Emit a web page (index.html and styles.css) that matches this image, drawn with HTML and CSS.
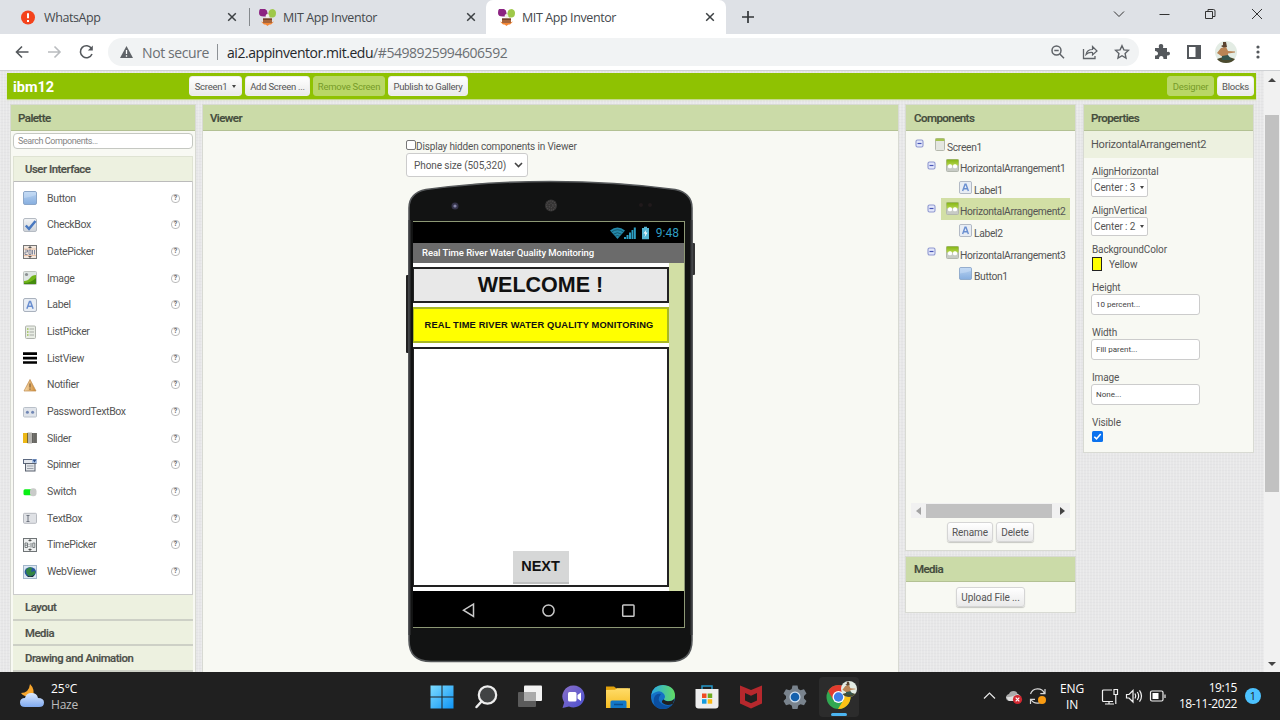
FILE: index.html
```html
<!DOCTYPE html>
<html lang="en">
<head>
<meta charset="utf-8">
<title>MIT App Inventor</title>
<link rel="stylesheet" href="styles.css">
</head>
<body>
<svg class="defs" width="0" height="0">
<defs>
<linearGradient id="gBlue" x1="0" y1="0" x2="0" y2="1"><stop offset="0" stop-color="#b9d3f1"/><stop offset="1" stop-color="#86aedf"/></linearGradient>
<linearGradient id="gGrey" x1="0" y1="0" x2="0" y2="1"><stop offset="0" stop-color="#f2f4f6"/><stop offset="1" stop-color="#cdd2d8"/></linearGradient>
<linearGradient id="gGreen" x1="0" y1="0" x2="0" y2="1"><stop offset="0" stop-color="#84b414"/><stop offset="1" stop-color="#b4d64c"/></linearGradient>
<linearGradient id="gOrange" x1="0" y1="0" x2="1" y2="0"><stop offset="0" stop-color="#f8ddb0"/><stop offset="1" stop-color="#cf8a34"/></linearGradient>
<linearGradient id="gWin" x1="0" y1="0" x2="1" y2="1"><stop offset="0" stop-color="#7ddcff"/><stop offset="1" stop-color="#0f94f5"/></linearGradient>
<linearGradient id="gChat" x1="0" y1="0" x2="1" y2="1"><stop offset="0" stop-color="#8a6fc8"/><stop offset="1" stop-color="#4a50cf"/></linearGradient>
<linearGradient id="gEdge" x1="0" y1="0" x2="1" y2="0"><stop offset="0" stop-color="#2aa8e6"/><stop offset="1" stop-color="#62dc62"/></linearGradient>
<linearGradient id="gFold" x1="0" y1="0" x2="0" y2="1"><stop offset="0" stop-color="#ffdc6a"/><stop offset="1" stop-color="#f6bd22"/></linearGradient>
<linearGradient id="gCloud" x1="0" y1="0" x2="0" y2="1"><stop offset="0" stop-color="#dbe9fd"/><stop offset="1" stop-color="#7fa9ef"/></linearGradient>
<symbol id="fav" viewBox="0 0 17 17"><path d="M1 0h5q2.500 1 2.500 4v3.500H6Q0 8 0 4 0 1 1 0z" fill="#8c2482"/><path d="M10 2q1-2 4-2 3 1 3 4 0 4-3 4.500h-3L9 6z" fill="#9fc849"/><circle cx="8.500" cy="7" r="1.900" fill="#f2efe8"/><path d="M2 12.500l3 1h7l3-1-3 3H5z" fill="#f58634"/><path d="M4 9.500h9v4.500H4z" fill="#a8653a"/><path d="M4 9.500h9v1.300H4z" fill="#6b3a26"/><path d="M5 14h7l-3.500 3z" fill="#f58634"/></symbol>
<symbol id="x" viewBox="0 0 10 10"><path d="M1.200 1.200l7.600 7.600M8.800 1.200L1.200 8.800" stroke="#3c4043" stroke-width="1.500"/></symbol>
<symbol id="avatar" viewBox="0 0 22 22"><circle cx="11" cy="11" r="11" fill="#e3ece4"/><path d="M2 18q9-4 18 0-3 4-9 4t-9-4z" fill="#4b4a2e"/><path d="M8 1l3 0 1 5-3 1-3-2 2-1z" fill="#5b4430"/><path d="M6 7l5-1 2 4 7 .500v1l-7 1v3H7L2 12z" fill="#b98455"/><path d="M7 15l6-1 4 5H7z" fill="#35564f"/></symbol>
<symbol id="button" viewBox="0 0 14 14"><rect x=".5" y=".5" width="13" height="13" rx="1.500" fill="url(#gBlue)" stroke="#8ba6c8"/><path d="M1 7q7-1 12-3V1H1z" fill="#d4e5f9" opacity=".4"/></symbol>
<symbol id="checkbox" viewBox="0 0 14 14"><rect x=".5" y=".5" width="13" height="13" rx="1.500" fill="url(#gGrey)" stroke="#b5bbc3"/><path d="M2.800 7.500l3.200 3.300L12.500 3" fill="none" stroke="#4878c0" stroke-width="2.500"/></symbol>
<symbol id="date" viewBox="0 0 14 14"><rect x=".5" y=".5" width="13" height="13" fill="#f3e8df" stroke="#777"/><path d="M7 1v2.500M7 11v2.500M5.500 2.500h3M5.500 11.500h3" stroke="#555"/><path d="M2 5h2.500v2H2v2.500h2.500M6 5h2v4.500H6zM9.500 5v4.500M11.500 5v4.500" fill="none" stroke="#777f96" stroke-width=".9"/><path d="M1 4h12M1 10.500h12" stroke="#e6a47c" stroke-width=".6"/></symbol>
<symbol id="image" viewBox="0 0 14 14"><rect x=".5" y=".5" width="13" height="13" rx="1" fill="#dfe6e3" stroke="#c0c5c0"/><circle cx="3.500" cy="3.500" r="1.600" fill="#8b9091"/><path d="M1 10q4 0 6-3t6-3v9H1z" fill="#72b51a"/><path d="M1 12q7 0 12-5v6H1z" fill="#448c0e"/></symbol>
<symbol id="label" viewBox="0 0 14 14"><rect x=".5" y=".5" width="13" height="13" rx="1.500" fill="#e8edf4" stroke="#aab2be"/><path d="M3.900 10.800L6.500 3.500h1L10.100 10.800M4.800 8.300h4.400" fill="none" stroke="#6a8fd0" stroke-width="1.500"/></symbol>
<symbol id="listpicker" viewBox="0 0 14 14"><rect x="2.500" y="1" width="10" height="12.500" rx="1" fill="#e9ede5" stroke="#b0b4ad"/><path d="M4 4h1.500M4 7h1.500M4 10h1.500" stroke="#9bbf54" stroke-width="1.400"/><path d="M6.500 4h4.500M6.500 7h4.500M6.500 10h4.500" stroke="#a7aba5"/></symbol>
<symbol id="listview" viewBox="0 0 14 14"><path d="M0 2.700h14M0 7.100h14M0 11.500h14" stroke="#000" stroke-width="2.700"/></symbol>
<symbol id="notifier" viewBox="0 0 14 14"><path d="M7 1.500L13 13H1z" fill="url(#gOrange)" stroke="#bf8a4c" stroke-width=".7"/><path d="M7 5.500v4M7 10.500v1.300" stroke="#7d603c" stroke-width="1.200"/></symbol>
<symbol id="password" viewBox="0 0 14 14"><rect x=".5" y="2.500" width="13" height="9.500" rx="1" fill="#e0e4ea" stroke="#b9c0c9"/><circle cx="4.400" cy="7.300" r="1.500" fill="#7187b5"/><circle cx="9.600" cy="7.300" r="1.500" fill="#7187b5"/></symbol>
<symbol id="slider" viewBox="0 0 14 14"><path d="M0 2h5v10H0z" fill="#edb817"/><path d="M9 2h5v10H9z" fill="#73726d"/><rect x="4.500" y="1.500" width="4.500" height="11" fill="#b5b4b0"/><path d="M4.500 2v10" stroke="#7d6a2a"/><path d="M9.500 2v10M12 2v10" stroke="#5d5d5a" stroke-width=".8"/></symbol>
<symbol id="spinner" viewBox="0 0 14 14"><rect x=".5" y="1.500" width="12.500" height="4" fill="#e4e8ee" stroke="#5c6980"/><path d="M9 1h5v4H9z" fill="#a9c0e2"/><path d="M9.500 1.500h4l-2 3z" fill="#2c4d88"/><rect x="2.500" y="5.500" width="9.500" height="7.500" fill="#e3e6ea" stroke="#59616e"/><path d="M4 8h6.500M4 10.500h6.500" stroke="#9ba1aa"/></symbol>
<symbol id="switch" viewBox="0 0 14 14"><rect x="0.500" y="4.200" width="9" height="6" rx="1.500" fill="#09ef14"/><rect x="7" y="3.200" width="6.500" height="8" rx="3" fill="#c9cbc9"/></symbol>
<symbol id="textbox" viewBox="0 0 14 14"><rect x=".5" y="2.300" width="13" height="10" rx="1" fill="#dfe1e5" stroke="#b7bac0"/><path d="M3.500 4.500h3M3.500 10.500h3M5 4.500v6" stroke="#6f7580"/></symbol>
<symbol id="time" viewBox="0 0 14 14"><rect x=".5" y=".5" width="13" height="13" fill="#eef0f0" stroke="#6f7476"/><path d="M7 1v2.500M7 10.500V13M5.500 2.500h3M5.500 11.500h3" stroke="#555"/><path d="M2 5h2.500v4.500H2zM2 7.200h2.500M6 5.800v1M6 8v1M8 5v4.500M9.800 5h2v4.500h-2z" fill="none" stroke="#5e6568" stroke-width=".8"/></symbol>
<symbol id="web" viewBox="0 0 14 14"><rect x=".5" y=".5" width="13" height="13" fill="#dce7f2" stroke="#a2b6cb"/><ellipse cx="7.300" cy="7" rx="5.700" ry="4.800" fill="#24549c"/><path d="M3 5q3-4 6-2l-1 4 4-1q1 4-4 5-5 0-5-6z" fill="#328544"/><path d="M3 10q5 3 9-1l-2 3H5z" fill="#1a3238"/></symbol>
<symbol id="screen" viewBox="0 0 10 13"><rect x=".5" y=".5" width="9" height="12" rx="1" fill="#e4e6e0" stroke="#b4b8ad"/><path d="M.5 .5h9v2.500h-9z" fill="#a4c250"/></symbol>
<symbol id="harr" viewBox="0 0 13 13"><rect x=".5" y=".5" width="12" height="12" rx="1" fill="#c7cbc5" stroke="#b2b7ae"/><path d="M.5 .5h12v6H.500z" fill="url(#gGreen)"/><rect x="2" y="5.300" width="4" height="4" rx="1.500" fill="#fff"/><rect x="7" y="5.300" width="4" height="4" rx="1.500" fill="#fff"/></symbol>
<symbol id="minus" viewBox="0 0 9 9"><rect x="1" y="1" width="7" height="7" rx="1.500" fill="#e4e8fb" stroke="#8f98cf" stroke-width="1.100"/><path d="M2.500 4.500h4" stroke="#4755b5" stroke-width="1.200"/></symbol>
</defs>
</svg>

<div class="tabs">
  <div class="tab tab-a">
    <svg class="t-ico" viewBox="0 0 17 17"><circle cx="9" cy="8.500" r="7" fill="#f4431c"/><path d="M9 4.300v5M9 11v2" stroke="#fff" stroke-width="2"/></svg>
    <span class="t-name">WhatsApp</span><svg class="t-x"><use href="#x"/></svg>
  </div>
  <div class="tab tab-b"><svg class="t-ico"><use href="#fav"/></svg><span class="t-name">MIT App Inventor</span><svg class="t-x"><use href="#x"/></svg></div>
  <div class="tab tab-c"><svg class="t-ico"><use href="#fav"/></svg><span class="t-name">MIT App Inventor</span><svg class="t-x"><use href="#x"/></svg></div>
  <svg class="plus" viewBox="0 0 12 12"><path d="M6 0v12M0 6h12" stroke="#333639" stroke-width="1.700"/></svg>
  <svg class="win" viewBox="0 0 160 20"><g fill="none" stroke="#333" stroke-width="1"><path d="M10 7.500l5 5 5-5M55.500 10.500h10M101.500 7.500h7v7h-7zM104 7.500v-2h5.500q1.500 0 1.500 1.500v5.500h-2M148 5l10 10M158 5l-10 10"/></g></svg>
</div>

<div class="toolbar">
  <svg class="nav" viewBox="0 0 94 36"><g fill="none" stroke="#54585c" stroke-width="1.600"><path d="M28.500 18H17M22 12.500L16.500 18l5.500 5.500"/><path d="M48 18h11.500M54.500 12.500L60 18l-5.500 5.500" stroke="#b9bcbf"/><path d="M91.500 14.500A6 6 0 1 0 92 20"/></g><path d="M92.800 11.500v5h-5z" fill="#54585c"/></svg>
  <div class="omni">
    <svg class="warn" viewBox="0 0 13 12"><path d="M6.500 0L13 12H0z" fill="#5f6368"/><path d="M6.500 4v4M6.500 9.300v1.400" stroke="#fff" stroke-width="1.300"/></svg>
    <span class="notsec">Not secure</span><i class="sep"></i><span class="url"><b>ai2.appinventor.mit.edu</b>/#5498925994606592</span>
    <svg class="omni-ico" viewBox="0 0 80 18"><g fill="none" stroke="#5f6368" stroke-width="1.500"><circle cx="6.500" cy="7.500" r="4.500"/><path d="M9.800 11l4.200 4.200M4.300 7.500h4.400"/><path d="M33.500 6v9.500H45V13" stroke-width="1.300"/><path d="M36 11.500q1-5 6.500-5V3.500L47 8l-4.500 4V9.500q-4-.5-6.500 2z" stroke-width="1.200"/><path d="M72 2.700l1.900 4.200 4.500.5-3.300 3.100.9 4.500-4-2.300-4 2.300.9-4.500-3.300-3.100 4.500-.5z" stroke-width="1.400"/></g></svg>
  </div>
  <svg class="ext" viewBox="0 0 44 18"><path d="M1 5h4q-1-4 2-4t2 4h4v4q3-1 3 1.500T13 12.500V16H9.500q0-3-2.300-3T5 16H1v-3.500q3 0 3-2T1 8z" fill="#54585c"/><path d="M34 3h12v12H34z" fill="none" stroke="#54585c" stroke-width="2"/><path d="M41.500 3h5v12h-5z" fill="#54585c"/></svg>
  <svg class="ava"><use href="#avatar"/></svg>
  <svg class="dots" viewBox="0 0 4 14"><g fill="#54585c"><circle cx="2" cy="2" r="1.600"/><circle cx="2" cy="7" r="1.600"/><circle cx="2" cy="12" r="1.600"/></g></svg>
</div>

<div class="page">
  <div class="main">
    <div class="greenbar">
      <span class="proj">ibm12</span>
      <span class="btn b1">Screen1 <i class="tri"></i></span><span class="btn b2">Add Screen ...</span><span class="btn b3 off">Remove Screen</span><span class="btn b4">Publish to Gallery</span>
      <span class="btn b5 off">Designer</span><span class="btn b6">Blocks</span>
    </div>
    <div class="cols">
      <section class="panel palette">
        <h2>Palette</h2>
        <div class="search">Search Components...</div>
        <h3 class="first">User Interface</h3>
        <ul class="list">
          <li><svg><use href="#button"/></svg><span>Button</span><em>?</em></li>
          <li><svg><use href="#checkbox"/></svg><span>CheckBox</span><em>?</em></li>
          <li><svg><use href="#date"/></svg><span>DatePicker</span><em>?</em></li>
          <li><svg><use href="#image"/></svg><span>Image</span><em>?</em></li>
          <li><svg><use href="#label"/></svg><span>Label</span><em>?</em></li>
          <li><svg><use href="#listpicker"/></svg><span>ListPicker</span><em>?</em></li>
          <li><svg><use href="#listview"/></svg><span>ListView</span><em>?</em></li>
          <li><svg><use href="#notifier"/></svg><span>Notifier</span><em>?</em></li>
          <li><svg><use href="#password"/></svg><span>PasswordTextBox</span><em>?</em></li>
          <li><svg><use href="#slider"/></svg><span>Slider</span><em>?</em></li>
          <li><svg><use href="#spinner"/></svg><span>Spinner</span><em>?</em></li>
          <li><svg><use href="#switch"/></svg><span>Switch</span><em>?</em></li>
          <li><svg><use href="#textbox"/></svg><span>TextBox</span><em>?</em></li>
          <li><svg><use href="#time"/></svg><span>TimePicker</span><em>?</em></li>
          <li><svg><use href="#web"/></svg><span>WebViewer</span><em>?</em></li>
        </ul>
        <h3>Layout</h3><h3>Media</h3><h3>Drawing and Animation</h3>
      </section>

      <section class="panel viewer">
        <h2>Viewer</h2>
        <div class="hidden-row"><i class="cb"></i><span>Display hidden components in Viewer</span></div>
        <div class="size"><span>Phone size (505,320)</span><svg viewBox="0 0 9 6"><path d="M1 1l3.500 3.500L8 1" fill="none" stroke="#444" stroke-width="1.600"/></svg></div>
        <div class="phone">
          <svg class="body" viewBox="0 0 290 484">
            <rect x="0" y="95" width="4" height="78" rx="1" fill="#222"/><rect x="285" y="63" width="4" height="32" rx="1" fill="#333"/>
            <path d="M3 28Q3 13 20 9.500Q80 1.500 144.500 1.500T269 9.500Q286 13 286 28V460Q286 481.500 264 481.500H25Q3 481.500 3 460z" fill="#121313" stroke="#55585a" stroke-width="1.600"/>
            <path d="M3.500 40V455M285.500 40V455" stroke="#3b3d3f" stroke-width="2"/>
            <circle cx="49" cy="26" r="3.500" fill="#343349"/><circle cx="49" cy="26" r="1.600" fill="#8585a8"/>
            <circle cx="145" cy="25.500" r="6" fill="#343333"/><circle cx="145" cy="25.500" r="4.500" fill="none" stroke="#4d4b4b" stroke-width="1.500" stroke-dasharray="1 1"/><circle cx="145" cy="25.500" r="2" fill="none" stroke="#4d4b4b" stroke-width="1.500" stroke-dasharray="1 1"/>
            <circle cx="235" cy="25" r="2" fill="#201a1c"/><circle cx="244" cy="25" r="2" fill="#201a1c"/>
          </svg>
          <div class="screen">
            <div class="status">
              <svg viewBox="0 0 42 14"><g fill="#2d9fc4"><path d="M0 4.500Q7.500-1.500 15 4.500L7.500 13z" fill="#2489aa"/><path d="M1.500 6Q7.500 1.500 13.500 6M3.300 8.200q4-3 8.400 0M5.200 10.300q2.400-1.600 4.600 0" fill="none" stroke="#0b4253" stroke-width=".7"/><path d="M14 13v-2h2v2zM16.500 13V9h2v4zM19 13V6.500h2V13zM21.500 13V4h1.800v9zM23.800 13V1.500h2V13z"/><path d="M32 2h2V.8h3V2h2v11.200h-7z" fill="#55b5d4"/><path d="M36.500 3.500l-3 4h2l-1 4 3-5h-2z" fill="#fff"/></g></svg>
              <span>9:48</span>
            </div>
            <div class="title">Real Time River Water Quality Monitoring</div>
            <div class="content">
              <div class="stack">
                <div class="welcome">WELCOME !</div>
                <div class="yellow">REAL TIME RIVER WATER QUALITY MONITORING</div>
                <div class="big"><span>NEXT</span></div>
              </div>
            </div>
            <svg class="navbar" viewBox="0 0 271 35"><g fill="none" stroke="#c9c9c9" stroke-width="1.500"><path d="M60.500 13v12.500L50.500 19.200z"/><circle cx="135.500" cy="19.500" r="5.600"/><rect x="209.700" y="14" width="11.300" height="11.300" rx=".8"/></g></svg>
          </div>
        </div>
      </section>

      <div class="mid">
        <section class="panel comps">
          <h2>Components</h2>
          <div class="tree">
            <div class="node n0"><svg class="mn"><use href="#minus"/></svg><span class="it"><svg class="scr"><use href="#screen"/></svg>Screen1</span></div>
            <div class="node n1"><svg class="mn"><use href="#minus"/></svg><span class="it"><svg><use href="#harr"/></svg>HorizontalArrangement1</span></div>
            <div class="node n2"><span class="it"><svg><use href="#label"/></svg>Label1</span></div>
            <div class="node n1"><svg class="mn"><use href="#minus"/></svg><span class="it sel"><svg><use href="#harr"/></svg>HorizontalArrangement2</span></div>
            <div class="node n2"><span class="it"><svg><use href="#label"/></svg>Label2</span></div>
            <div class="node n1"><svg class="mn"><use href="#minus"/></svg><span class="it"><svg><use href="#harr"/></svg>HorizontalArrangement3</span></div>
            <div class="node n2"><span class="it"><svg><use href="#button"/></svg>Button1</span></div>
          </div>
          <div class="hscroll"><i class="la"></i><i class="thumb"></i><i class="ra"></i></div>
          <div class="acts"><span class="btn rn">Rename</span><span class="btn dl">Delete</span></div>
        </section>
        <section class="panel media">
          <h2>Media</h2>
          <div class="acts"><span class="btn up">Upload File ...</span></div>
        </section>
      </div>

      <section class="panel props">
        <h2>Properties</h2>
        <div class="sub">HorizontalArrangement2</div>
        <div class="form">
          <label>AlignHorizontal</label><div class="sel2">Center : 3 <i class="tri"></i></div>
          <label>AlignVertical</label><div class="sel2">Center : 2 <i class="tri"></i></div>
          <label>BackgroundColor</label><div class="color"><i></i>Yellow</div>
          <label class="l4">Height</label><div class="box">10 percent...</div>
          <label class="l5">Width</label><div class="box">Fill parent...</div>
          <label class="l5">Image</label><div class="box">None...</div>
          <label class="l5">Visible</label><svg class="chk" viewBox="0 0 11 11"><rect width="11" height="11" rx="1.500" fill="#0b72ee"/><path d="M2.300 5.700l2.200 2.200L8.700 3" fill="none" stroke="#fff" stroke-width="1.600"/></svg>
        </div>
      </section>
    </div>
  </div>
  <div class="vscroll"><i class="ua"></i><i class="vthumb"></i><i class="da"></i></div>
</div>

<div class="taskbar">
  <div class="weather">
    <svg viewBox="0 0 26 26"><path d="M11 1q5 5 3 12H6q-3-1-4-3 8 0 9-9z" fill="#f6a52c"/><path d="M6 24q-5 0-5-4.500T6 15q1-5 6.500-5t6.500 5q6 0 6 4.500T20 24z" fill="url(#gCloud)"/></svg>
    <div><p>25°C</p><p class="haze">Haze</p></div>
  </div>
  <div class="apps">
    <span><svg viewBox="0 0 28 28"><path d="M2.500 2.500h11v11h-11zM14.500 2.500h11v11h-11zM2.500 14.500h11v11h-11zM14.500 14.500h11v11h-11z" fill="url(#gWin)"/></svg></span>
    <span><svg viewBox="0 0 28 28"><circle cx="15.500" cy="12" r="8.700" fill="#414344" stroke="#ededed" stroke-width="2.200"/><path d="M9.500 18.500l-5 5.500" stroke="#ededed" stroke-width="2.500" stroke-linecap="round"/></svg></span>
    <span><svg viewBox="0 0 28 28"><rect x="2" y="9" width="18" height="15" rx="1" fill="#5b5b5b"/><rect x="8" y="2.500" width="18" height="15.500" rx="1" fill="#f2f2f2"/><path d="M8 9h12v9H8z" fill="#aaa"/></svg></span>
    <span><svg viewBox="0 0 28 28"><path d="M14 2.500a11 11 0 1 1-5 21L2.500 25l1.700-5.500A11 11 0 0 1 14 2.500z" fill="url(#gChat)"/><rect x="8" y="9" width="8.500" height="9.500" rx="1.500" fill="#fff"/><path d="M17.500 12l3.500-2.500v8.500L17.500 15.500z" fill="#fff"/></svg></span>
    <span><svg viewBox="0 0 28 28"><path d="M2 3.500h8l2.500 2H24v8H2z" fill="#e2a20b"/><path d="M2 7l9-.2 2-1.500h13V25H2z" fill="url(#gFold)"/><path d="M6.500 25v-6q0-1.500 1.500-1.500h13q1.500 0 1.500 1.500v6z" fill="#1378c8"/><path d="M10 21.500h9" stroke="#0b4f91" stroke-width="1.500"/></svg></span>
    <span><svg viewBox="0 0 28 28"><circle cx="14" cy="14" r="12" fill="#1571c6"/><path d="M2.300 12Q4 2 14 2q12 1 12 11 0 5-6 5-5 0-5-2 2-2 0-5-3-4-8-2-3 1-4.700 3z" fill="url(#gEdge)"/><path d="M12 11q-5 6 1 10 5 3 10 .5-4 5-10 4.500Q3 25 5 15q2-5 7-4z" fill="#0b4fa0"/><path d="M14.500 16.500q2 2 5 1.700 3.500 0 6-2.500l-1.500 5q-6 3-10.500-.7-1.500-2 1-3.500z" fill="#202020"/></svg></span>
    <span><svg viewBox="0 0 28 28"><path d="M9 6.500V3h10v3.500" fill="none" stroke="#2596c8" stroke-width="1.500"/><path d="M2.500 6h23v16.500q0 3-3 3h-17q-3 0-3-3z" fill="#eee"/><path d="M9 10.500h4.500V15H9z" fill="#f04a22"/><path d="M14.700 10.500h4.500V15h-4.500z" fill="#6daa20"/><path d="M9 16.200h4.500v4.500H9z" fill="#139ce0"/><path d="M14.700 16.200h4.500v4.500h-4.500z" fill="#fcb813"/></svg></span>
    <span><svg viewBox="0 0 28 28"><path d="M3 2.500l11 4.500 11-4.500v18L14 25.500 3 20.500zM8 10v7.500l6 2.800 6-2.800V10l-6 2.700z" fill="#b6282d" fill-rule="evenodd"/></svg></span>
    <span><svg viewBox="0 0 28 28"><path d="M11.500 2.500h5l.8 3.500 2.200 1.200 3.500-1 2.500 4.300-2.500 2.500v2.500l2.500 2.500-2.500 4.300-3.500-1-2.200 1.200-.8 3.500h-5l-.8-3.500-2.200-1.200-3.500 1L2.500 18 5 15.500V13l-2.500-2.500L5 6.200l3.500 1L10.700 6z" fill="#79838d"/><circle cx="14" cy="14" r="5.500" fill="#cfe0f1"/><circle cx="14" cy="14" r="4.300" fill="#1561ad"/></svg></span>
    <span class="on"><svg viewBox="0 0 28 28"><circle cx="13.500" cy="14" r="12" fill="#31a852"/><path d="M3.100 8A12 12 0 0 1 24.500 9H13.500L8.300 17z" fill="#e33b2e"/><path d="M24.600 9.200A12 12 0 0 1 13 26l5.500-9-5-8z" fill="#fbc116"/><circle cx="13.500" cy="14" r="6" fill="#fff"/><circle cx="13.500" cy="14" r="4.700" fill="#3f7ee8"/></svg><svg class="mini" viewBox="0 0 22 22"><use href="#avatar"/></svg><i></i></span>
  </div>
  <div class="tray">
    <svg class="tr1" viewBox="0 0 70 24"><path d="M4 14.500l5.500-5.500 5.500 5.500" fill="none" stroke="#e8e8e8" stroke-width="1.200"/><path d="M29 17q-3-1-3-3.500T29 10q1-3 4.500-3t4 3q3.500 1 3.500 4t-3 3z" fill="#ababab"/><path d="M26 13q3 1 12-3l3 4-3 3h-9z" fill="#e2e2e2"/><circle cx="37.500" cy="15.500" r="4.600" fill="#d22831"/><path d="M35.700 13.700l3.600 3.600M39.300 13.700l-3.600 3.600" stroke="#fff" stroke-width="1.200"/><path d="M50.500 10A7.500 7.500 0 0 1 64.500 9.500M65 5v4.700h-4.700M64.500 14A7.500 7.500 0 0 1 51 15.500M50.500 20v-4.700H55" fill="none" stroke="#d8d8d8" stroke-width="1.200"/><circle cx="62" cy="16" r="4" fill="#f99b12"/></svg>
    <div class="lang"><p>ENG</p><p>IN</p></div>
    <svg class="tr2" viewBox="0 0 66 24"><g fill="none" stroke="#f2f2f2" stroke-width="1.200"><path d="M12 6H3.500q-1 0-1 1v9.500q0 1 1 1H13M5 20h9M9 17.500V20M14 5.500h3.500v5H14zM15.800 10.500V20"/><path d="M26.500 10.500h2.500l4-4v11.500l-4-4h-2.500zM35 9.500q1.500 2.500 0 5M37.300 8q2.700 4 0 8M39.500 6.300q4 5.700 0 11.400"/><rect x="50.500" y="7" width="12.500" height="10" rx="1.500"/><path d="M65 10.500v3.500"/></g><path d="M52.500 9h6v6h-6z" fill="#fff"/></svg>
    <div class="clock"><p class="tm">19:15</p><p>18-11-2022</p></div>
    <b class="note">1</b>
  </div>
</div>
</body>
</html>
```

FILE: styles.css
```css
* { box-sizing: border-box; }
body { margin: 0; width: 1280px; height: 720px; overflow: hidden; display: flex; flex-direction: column; font-family: Roboto, "Liberation Sans", sans-serif; font-size: 10.5px; color: #555; background: #fff; }
p, h2, h3, ul { margin: 0; padding: 0; }
ul { list-style: none; }
svg { display: block; flex: none; }
span { white-space: nowrap; }
.defs { position: absolute; }

.tabs { height: 34px; flex: none; background: #dee1e6; display: flex; align-items: center; font-family: "Open Sans", "Noto Sans", sans-serif; font-size: 12.500px; color: #45494d; }
.tab { height: 34px; display: flex; align-items: center; }
.t-ico { width: 17px; height: 17px; }
.t-name { flex: 1; margin-left: 8px; letter-spacing: -.4px; }
.t-x { width: 10px; height: 10px; }
.tab-a { width: 248px; padding: 0 11px 0 19px; }
.tab-b { width: 238px; padding: 0 10px 0 10px; border-left: 1px solid #dee1e6; background: linear-gradient(#85898d, #85898d) 0 50% / 1px 18px no-repeat; }
.tab-b .t-name { margin-left: 7px; }
.tab-c { width: 240px; padding: 0 11px 0 12px; background: #fff; border-radius: 7px 7px 0 0; }
.tab-c .t-name { margin-left: 7px; }
.plus { width: 12px; height: 12px; margin-left: 16px; }
.win { width: 160px; height: 20px; margin: -6px 16px 0 auto; }

.toolbar { height: 37px; flex: none; background: #fff; border-bottom: 1px solid #cfd1d4; display: flex; align-items: center; }
.nav { width: 94px; height: 36px; }
.omni { margin-left: 14px; width: 1031px; height: 28px; border-radius: 14px; background: #f1f3f4; display: flex; align-items: center; padding: 0 9px 0 12px; font: 14px "Open Sans", "Noto Sans", sans-serif; color: #6b6f73; }
.warn { width: 13px; height: 12px; margin-right: 9px; }
.notsec { width: 68px; letter-spacing: -.4px; }
.sep { width: 1px; height: 16px; background: #8d9195; margin: 0 9px 0 7px; }
.url { flex: 1; letter-spacing: -.45px; }
.url b { font-weight: 400; color: #25282b; }
.omni-ico { width: 80px; height: 18px; }
.ext { width: 44px; height: 18px; margin-left: 15px; overflow: visible; }
.ava { width: 22px; height: 22px; margin-left: 17px; }
.dots { width: 4px; height: 14px; margin-left: 19px; }

.page { height: 601px; flex: none; display: flex; background-color: #e7e7e8; background-image: repeating-linear-gradient(90deg, rgba(255,255,255,.2) 0 1px, transparent 1px 3px), repeating-linear-gradient(0deg, rgba(190,190,195,.1) 0 1px, transparent 1px 3px); overflow: hidden; }
.main { width: 1264px; padding: 2px 0 0 7px; }
.greenbar { width: 1249px; height: 26px; background: #8fc202; display: flex; align-items: center; box-shadow: 0 1px 1px #c5d98b; }
.proj { color: #fff; font-weight: 700; font-size: 14.500px; width: 182px; padding: 3px 0 0 6px; }
.btn { display: flex; align-items: center; justify-content: center; height: 20px; border-radius: 3px; background: linear-gradient(#fff, #eaeaea); color: #555; font-size: 9.500px; border: 1px solid #d5d5d5; box-shadow: 0 1px 1px rgba(0,0,0,.2); }
.greenbar .btn { border-color: #eee; box-shadow: none; letter-spacing: -.25px; }
.greenbar .off { background: #b9d767; border-color: #b9d767; color: #779b29; }
.tri { border: 2px solid transparent; border-top: 3px solid #444; border-bottom: 0; margin-left: 5px; }
.b1 { width: 53px; } .b2 { width: 65px; margin-left: 3px; } .b3 { width: 72px; margin-left: 3px; } .b4 { width: 80px; margin-left: 3px; }
.b5 { width: 47px; margin-left: auto; } .b6 { width: 37px; margin: 0 2px 0 3px; }

.cols { display: flex; align-items: flex-start; margin-top: 6px; padding-left: 4px; }
.panel { background: #f8f9f3; box-shadow: 0 0 0 1px #d8dad3; }
h2 { height: 26px; line-height: 26px; background: #cbdba8; border-bottom: 1px solid #b3c193; font-size: 11.500px; font-weight: 500; color: #444c3c; padding-left: 7px; letter-spacing: -.55px; -webkit-text-stroke: .2px; }
.palette { width: 184px; height: 567px; padding: 0 2px; }
.palette h2 { margin: 0 -2px; }
.search { height: 16px; margin-top: 2px; line-height: 14px; border: 1px solid #c5c8c2; border-radius: 4px; background: #fff; font-size: 9px; letter-spacing: -.45px; color: #858585; padding-left: 4px; letter-spacing: -.45px; }
.search { letter-spacing: -.43px; }
h3 { height: 25.700px; line-height: 26px; background: #edf1e0; border-bottom: 2px solid #cdd0c6; padding-left: 12px; font-size: 11.300px; font-weight: 500; color: #4c4f49; letter-spacing: -.43px; -webkit-text-stroke: .2px; }
.first { margin-top: 7px; height: 26px; border: 1px solid #dfe3d3; border-bottom-color: #bbb; padding-left: 11px; }
.list { height: 413px; background: #fff; border: 1px solid #ccc; border-top: 0; padding: 3px 12px 0 9px; }
.list li { height: 26.670px; display: flex; align-items: center; font-size: 10.500px; letter-spacing: -.35px; }
.list svg { width: 14px; height: 14px; margin-right: 10px; }
.list span { flex: 1; }
.list em { width: 9px; height: 9px; border: 1px solid #bbb; border-radius: 4px; font: 700 7px/7px Roboto, sans-serif; text-align: center; color: #666; letter-spacing: 0; }

.viewer { width: 695px; height: 567px; margin-left: 8px; }
.hidden-row { display: flex; align-items: center; height: 15px; margin: 8px 0 0 203px; letter-spacing: -.16px; font-size: 10px; }
.cb { width: 10px; height: 10px; border: 1px solid #777; border-radius: 2px; background: #fff; margin-top: -3px; }
.size { width: 122px; height: 24px; margin: -1px 0 0 203px; background: #fff; border: 1px solid #ccc; border-radius: 3px; display: flex; align-items: center; justify-content: space-between; padding: 0 4px 0 7px; font-size: 10px; letter-spacing: -.08px; }
.size svg { width: 9px; height: 6px; }
.phone { position: relative; width: 290px; height: 484px; margin: 3px 0 0 203px; padding: 41px 0 0 7px; }
.body { position: absolute; left: 0; top: 0; width: 290px; height: 484px; }
.screen { position: relative; width: 272px; height: 407px; border: 1px solid #8d9875; border-left: 0; background: #000; }
.status { height: 21px; display: flex; align-items: center; justify-content: flex-end; padding-right: 5px; color: #2f9fc5; font-size: 12px; }
.status svg { width: 42px; height: 14px; margin-right: 4px; }
.title { height: 20px; line-height: 19px; background: #6b6b6b; color: #fff; font-size: 9.500px; font-weight: 500; padding-left: 9px; letter-spacing: -.05px; }
.content { height: 328px; background: #d2dfa5; }
.stack { width: 256px; height: 328px; background: #fff; padding: 4px 0 4px; display: flex; flex-direction: column; gap: 4px; font-family: "Liberation Sans", Arial, sans-serif; font-weight: 700; color: #111; text-align: center; }
.welcome { height: 36px; line-height: 33px; background: #e8e8e8; border: 2px solid #222; border-left-width: 1px; font-size: 21.500px; }
.yellow { height: 36px; line-height: 32px; background: #ff0; border: 2px solid #a8b823; border-left-width: 1px; font-size: 9.300px; letter-spacing: .16px; white-space: nowrap; padding-right: 3px; }
.big { flex: 1; border: 2px solid #222; border-left-width: 1px; display: flex; align-items: flex-end; justify-content: center; padding-bottom: 1px; }
.big span { width: 56px; height: 33px; line-height: 31px; background: #d6d7d7; border-bottom: 2px solid #bfc0c0; font-size: 14.500px; }
.navbar { width: 271px; height: 35px; }

.mid { width: 169px; margin-left: 8px; }
.comps { height: 445px; display: flex; flex-direction: column; }
.comps h2, .media h2 { padding-left: 8px; }
.tree { height: 372px; padding-top: 3px; }
.node { display: flex; align-items: center; height: 21.550px; }
.it { display: flex; align-items: flex-end; height: 22px; line-height: 13px; padding-bottom: 2px; font-size: 10.300px; letter-spacing: -.32px; }
.it svg { width: 13px; height: 13px; margin: 0 1px 3px 5px; }
.it .scr { width: 10px; margin-right: 2px; }
.mn { width: 9px; height: 9px; margin-top: -2px; }
.n0 { padding-left: 9px; } .n0 .it { margin-left: 6px; }
.n1 { padding-left: 21px; } .n1 .it { margin-left: 5px; width: 129px; }
.n2 { padding-left: 48px; }
.n2 svg { margin-right: 2px; }
.sel { background: #d2dfa5; }
.hscroll { height: 15px; margin: 0 5px; background: #f1f1f1; display: flex; align-items: center; }
.thumb { width: 126px; height: 14px; margin: 0 8px 0 5px; background: #c1c1c1; }
.la { border: 4px solid transparent; border-right: 5px solid #a3a3a3; border-left: 0; margin-left: 5px; }
.ra { border: 4px solid transparent; border-left: 5px solid #444; border-right: 0; }
.acts { display: flex; justify-content: center; gap: 3px; margin-top: 4px; }
.acts .btn { font-size: 10px; letter-spacing: -.1px; }
.rn { width: 46px; } .dl { width: 38px; } .up { width: 69px; }
.media { margin-top: 7px; height: 55px; }
.media h2 { height: 25px; line-height: 25px; }
.media .acts { margin-top: 5px; }

.props { width: 169px; height: 347px; margin-left: 9px; }
.sub { height: 27px; line-height: 27px; background: #edf1e0; padding-left: 7px; font-size: 11px; letter-spacing: -.23px; }
.form { padding: 7px 7px 0; font-size: 10px; letter-spacing: -.13px; }
label { display: block; height: 13px; line-height: 13px; padding-left: 1px; }
.sel2 { width: 57px; height: 19px; line-height: 17px; border: 1px solid #ccc; border-radius: 2px; background: #fff; padding-left: 2px; margin-bottom: 7px; display: flex; align-items: center; letter-spacing: -.1px; }
.color { display: flex; align-items: center; height: 16px; }
.color i { width: 10px; height: 14px; border: 1px solid #222; background: #ff0; margin: 0 7px 0 1px; }
.l4 { margin-top: 9px; } .l5 { margin-top: 11px; }
.box { width: 109px; height: 21px; line-height: 19px; border: 1px solid #ccc; border-radius: 3px; background: #fff; font-size: 8px; letter-spacing: 0; padding-left: 4px; color: #444; }
.chk { width: 11px; height: 11px; margin: 2px 0 0 1px; }

.vscroll { width: 16px; background: #f1f1f1; display: flex; flex-direction: column; align-items: center; }
.ua { border: 4px solid transparent; border-bottom: 4px solid #444; border-top: 0; margin-top: 7px; }
.vthumb { width: 14px; height: 377px; background: #c1c1c1; margin: 33px 0 auto; }
.da { border: 4px solid transparent; border-top: 4px solid #444; border-bottom: 0; margin-bottom: 6px; }

.taskbar { height: 48px; flex: none; background: #202020; display: flex; align-items: center; color: #fff; font: 12px/16px "Open Sans", "Noto Sans", sans-serif; }
.weather { width: 420px; display: flex; align-items: center; padding-left: 19px; gap: 6px; }
.weather p { position: relative; top: 1px; }
.weather svg { width: 26px; height: 26px; }
.weather .haze { color: #bdbdbd; letter-spacing: -.2px; }
.apps { display: flex; }
.apps span { position: relative; width: 44.100px; height: 48px; display: flex; justify-content: center; align-items: center; padding-top: 2px; }
.apps svg { width: 28px; height: 28px; }
.apps .on { background: #2c2c2c; border-radius: 4px; width: 40px; height: 40px; margin: 5px 0 0 2px; padding-top: 0; }
.apps .mini { position: absolute; width: 16px; height: 16px; right: 2px; top: 4px; }
.on i { position: absolute; bottom: 1px; width: 16px; height: 3px; border-radius: 2px; background: #4cb5f2; }
.tray { margin-left: auto; display: flex; align-items: center; padding-right: 19px; }
.tr1 { width: 70px; height: 24px; }
.lang { text-align: center; width: 30px; margin-left: 7px; margin-right: 13px; letter-spacing: -.2px; padding-top: 1px; }
.tr2 { width: 66px; height: 24px; }
.clock { text-align: right; width: 71px; letter-spacing: -.45px; }
.note { width: 16px; height: 16px; margin-left: 8px; border-radius: 8px; background: #4cc2ff; color: #222; font-weight: 400; font-size: 11px; text-align: center; }
```
